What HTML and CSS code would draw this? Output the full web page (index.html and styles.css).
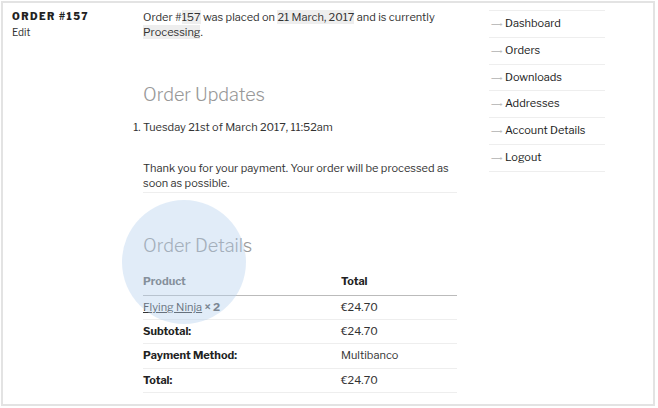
FILE: index.html
```html
<!DOCTYPE html>
<html>
<head>
<meta charset="utf-8">
<link rel="stylesheet" href="styles.css">
</head>
<body>
<div class="frame">
  <div class="layout">
    <aside class="meta">
      <div class="order-title">ORDER #157</div>
      <a class="edit">Edit</a>
    </aside>
    <main class="content">
      <p class="intro">Order #<mark>157</mark> was placed on <mark>21 March, 2017</mark> and is currently <mark>Processing</mark>.</p>
      <h2 class="heading updates-heading">Order Updates</h2>
      <ol class="notes">
        <li>
          <div class="note-date">Tuesday 21st of March 2017, 11:52am</div>
          <p class="note-text">Thank you for your payment. Your order will be processed as soon as possible.</p>
        </li>
      </ol>
      <h2 class="heading details-heading">Order Details</h2>
      <table class="details">
        <thead>
          <tr><th class="col-product">Product</th><th class="col-total">Total</th></tr>
        </thead>
        <tbody>
          <tr><td><a class="product-link">Flying Ninja</a> <strong class="qty">× 2</strong></td><td>€24.70</td></tr>
          <tr><th>Subtotal:</th><td>€24.70</td></tr>
          <tr><th>Payment Method:</th><td>Multibanco</td></tr>
          <tr><th>Total:</th><td>€24.70</td></tr>
        </tbody>
      </table>
      <div class="spotlight"></div>
    </main>
    <nav class="account-nav">
      <ul>
        <li><span class="arrow">⟶</span>Dashboard</li>
        <li><span class="arrow">⟶</span>Orders</li>
        <li><span class="arrow">⟶</span>Downloads</li>
        <li><span class="arrow">⟶</span>Addresses</li>
        <li><span class="arrow">⟶</span>Account Details</li>
        <li><span class="arrow">⟶</span>Logout</li>
      </ul>
    </nav>
  </div>
</div>
</body>
</html>
```

FILE: styles.css
```css
* { box-sizing: border-box; }
html, body { margin: 0; padding: 0; background: #fff; }
body {
  font-family: "Libre Franklin", Roboto, "Liberation Sans", sans-serif;
  color: #333;
  font-size: 11px;
  line-height: 15px;
}
.frame {
  margin: 1px 0 0 1px;
  width: 654px;
  height: 405px;
  border: 2px solid #e3e3e3;
  overflow: hidden;
}
.layout {
  display: flex;
  padding: 6px 0 0 9px;
}
.meta {
  width: 131px;
  flex: none;
}
.order-title {
  font-size: 10px;
  font-weight: 800;
  letter-spacing: 1.4px;
  color: #222;
  line-height: 15px;
}
.edit {
  display: block;
  margin-top: 1px;
  font-size: 10px;
  color: #333;
}
.content {
  width: 314px;
  flex: none;
  position: relative;
  padding-top: 1px;
}
.intro { margin: 0; }
mark {
  background: #eee;
  color: #333;
}
.heading {
  font-weight: 300;
  color: #999;
  font-size: 18px;
  line-height: 22px;
  margin: 0;
}
.updates-heading { margin-top: 44px; }
.notes {
  margin: 14px 0 0 0;
  padding: 0;
  list-style-position: outside;
}
.notes li { margin-left: 0; }
.note-date { margin: 0; }
.note-text {
  margin: 26px 0 0 0;
  padding-bottom: 1px;
  border-bottom: 1px solid #eee;
}
.details-heading { margin-top: 42px; }
.details {
  margin-top: 12px;
  width: 100%;
  border-collapse: collapse;
}
.details th, .details td {
  text-align: left;
  padding: 4px 0 4px 0;
  height: 24.4px;
  border-bottom: 1px solid #eee;
  vertical-align: middle;
}
.details thead th {
  border-bottom: 1px solid #bbb;
  height: 26px;
  padding-bottom: 5px;
}
.details th { font-weight: 700; color: #222; }
.col-product { width: 198px; color: #666 !important; }
.product-link {
  color: #333;
  text-decoration: underline;
  text-decoration-color: #333;
}
.qty { color: #555; }
.spotlight {
  position: absolute;
  left: -21px;
  top: 191px;
  width: 124px;
  height: 124px;
  border-radius: 50%;
  background: rgba(180, 208, 238, 0.4);
  pointer-events: none;
}
.account-nav {
  margin-left: 32px;
  width: 116px;
  flex: none;
  padding-top: 1px;
}
.account-nav ul {
  list-style: none;
  margin: 0;
  padding: 0;
  border-top: 1px solid #eee;
}
.account-nav li {
  height: 26.8px;
  line-height: 25px;
  border-bottom: 1px solid #eee;
  color: #222;
  padding-left: 2px;
}
.arrow {
  display: inline-block;
  width: 14px;
  color: #bdbdbd;
  font-size: 8px;
}
```
